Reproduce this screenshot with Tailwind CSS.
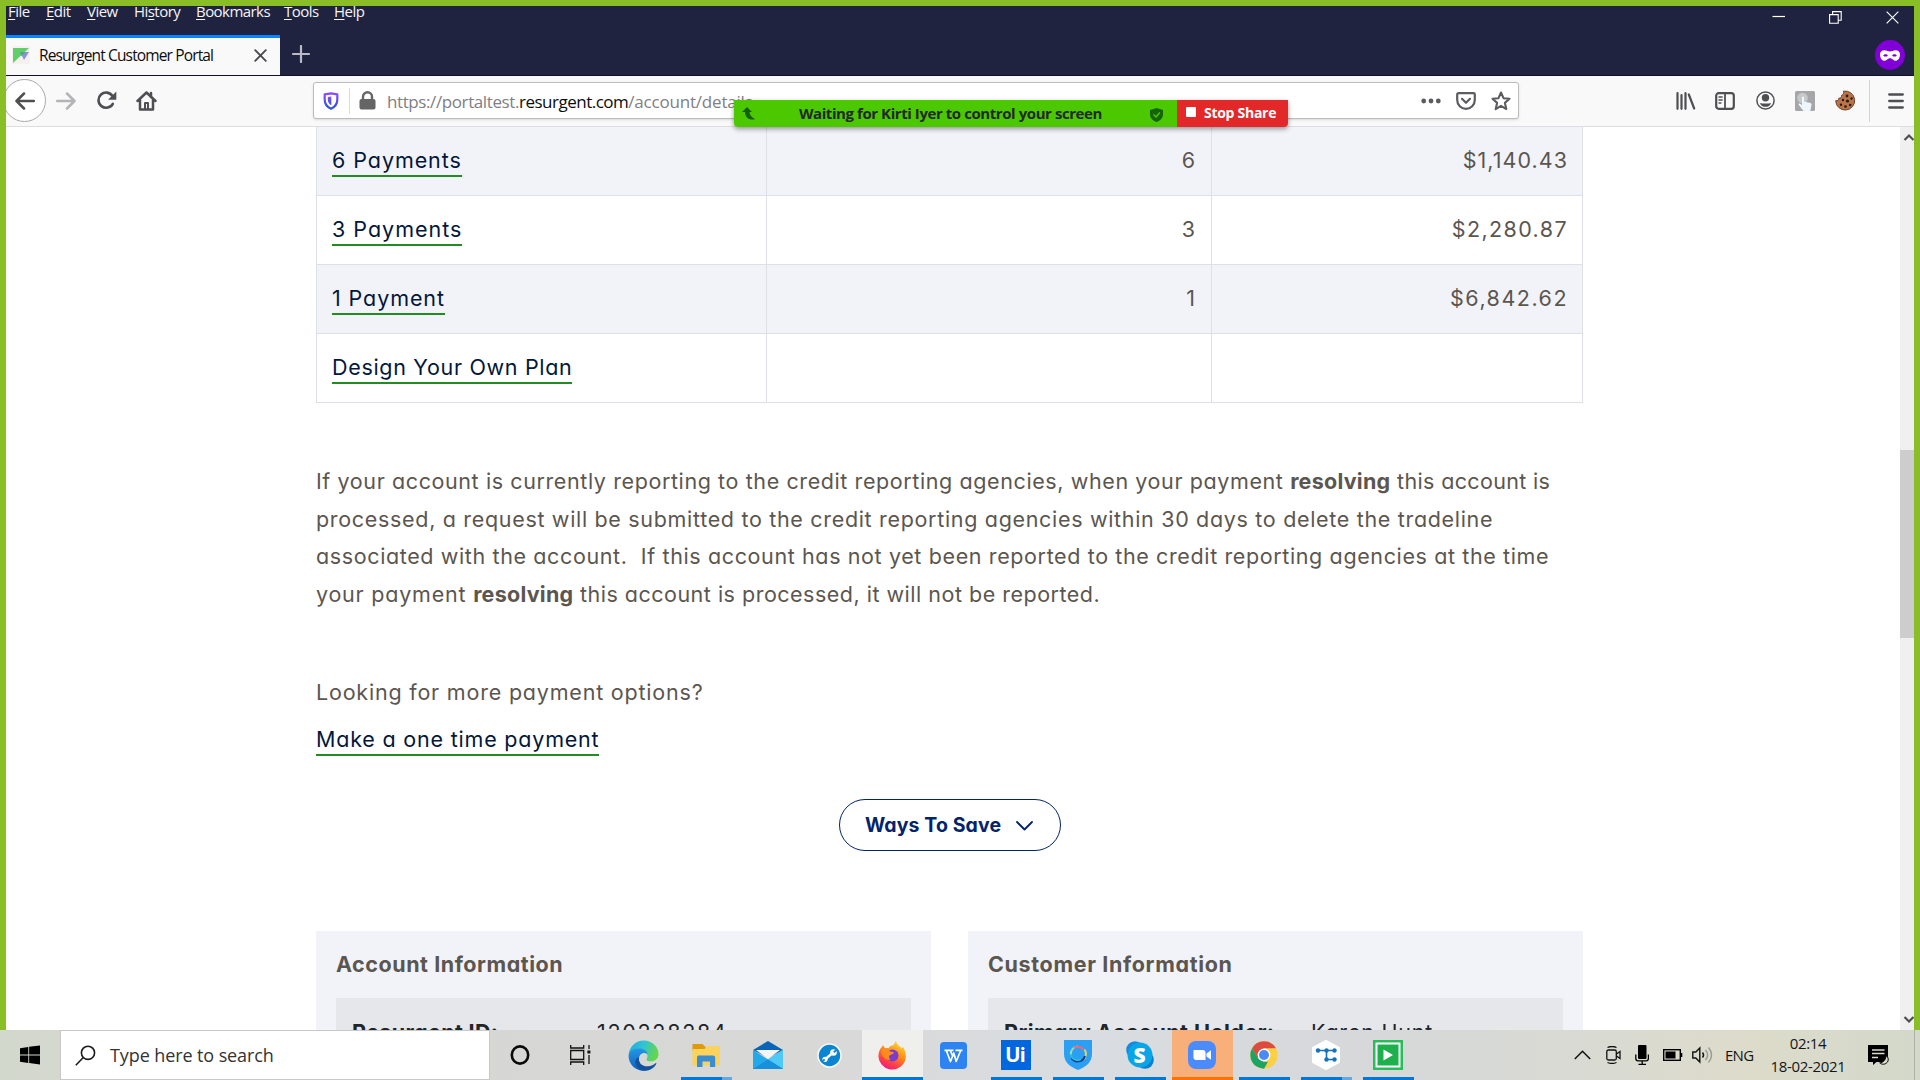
<!DOCTYPE html>
<html lang="en">
<head>
<meta charset="utf-8">
<title>Resurgent Customer Portal</title>
<script src="https://cdn.jsdelivr.net/npm/@tailwindcss/browser@4"></script>
</head>
<body class="w-[1920px] h-[1080px] overflow-hidden bg-white font-['Open_Sans',sans-serif]">
<div class="relative flex flex-col w-[1920px] h-[1080px]">

<!-- shared screen frame -->
<div class="flex flex-col h-[1030px] bg-[#8abe27] px-[6px] pt-[6px] overflow-hidden">

  <!-- title bar -->
  <header class="flex justify-between h-[70px] shrink-0 bg-[#20233f] border-b border-[#120f2b]">
    <div class="flex flex-col">
      <nav class="flex pl-[2px] h-[28px] text-[15px] leading-[11px] tracking-[-0.55px] text-[#f4f4f8]">
        <span class="w-[38px]"><u class="underline-offset-[2px]">F</u>ile</span>
        <span class="w-[41px]"><u class="underline-offset-[2px]">E</u>dit</span>
        <span class="w-[47px]"><u class="underline-offset-[2px]">V</u>iew</span>
        <span class="w-[62px]">Hi<u class="underline-offset-[2px]">s</u>tory</span>
        <span class="w-[88px]"><u class="underline-offset-[2px]">B</u>ookmarks</span>
        <span class="w-[50px]"><u class="underline-offset-[2px]">T</u>ools</span>
        <span><u class="underline-offset-[2px]">H</u>elp</span>
      </nav>
      <div class="flex h-[42px]">
        <div class="flex items-center w-[274px] bg-[#f9f9f9] border-t-[3px] border-[#0a84ff] pl-[6px] pb-[2px] mt-px">
          <svg class="w-[18px] h-[18px] shrink-0" viewBox="0 0 18 18"><rect width="18" height="18" fill="#f6f1ee"/><path d="M1 2h16L1 17z" fill="#5fd068"/><path d="M8 6h9l-5 8z" fill="#8a93d8"/><path d="M8 6h6l-5 4z" fill="#58a58f"/></svg>
          <span class="w-[224px] shrink-0 pl-[9px] text-[15.5px] tracking-[-0.86px] text-[#0c0c0d] whitespace-nowrap">Resurgent Customer Portal</span>
          <svg class="w-[13px] h-[13px] shrink-0" viewBox="0 0 13 13" stroke="#4a4a4f" stroke-width="1.9" stroke-linecap="round"><path d="M1.2 1.2l10.6 10.6M11.8 1.2L1.2 11.8"/></svg>
        </div>
        <svg class="w-[18px] h-[18px] ml-[12px] mt-[11px]" viewBox="0 0 18 18" stroke="#b9bac6" stroke-width="2.2" stroke-linecap="round"><path d="M9 1v16M1 9h16"/></svg>
      </div>
    </div>
    <div class="flex flex-col items-end pr-[9px]">
      <div class="flex items-center h-[22px] gap-[44px] pr-[6px]">
        <svg class="w-[13px] h-[13px]" viewBox="0 0 13 13" stroke="#fff" stroke-width="1.2"><path d="M.5 5.500h12.500"/></svg>
        <svg class="w-[13px] h-[13px]" viewBox="0 0 13 13" fill="none" stroke="#fff" stroke-width="1.1"><path d="M.6 3.6h8.6v8.6H.6zM3.6 3.5V.6h8.600v8.600H9.300"/></svg>
        <svg class="w-[13px] h-[13px]" viewBox="0 0 14 14" stroke="#fff" stroke-width="1.2"><path d="M.7.7l12.6 12.600M13.300.7L.7 13.300"/></svg>
      </div>
      <div class="flex items-center justify-center w-[30px] h-[30px] mt-[12px] rounded-full bg-[#8000d7]">
        <svg class="w-[20px] h-[11px]" viewBox="0 0 20 11"><path fill="#fff" fill-rule="evenodd" d="M4.5.2C7 .2 8.200 1.500 10 1.500S13 .2 15.500.2C18.500.2 20 2 20 4.500c0 3.500-2 6.300-4.300 6.300-2.700 0-3.200-2.500-5.700-2.500s-3 2.500-5.700 2.500C2 10.800 0 8 0 4.500 0 2 1.500.2 4.500.2zM3.200 5.400c1 1.600 3.600 1.600 4.700 0-1.100-1.700-3.700-1.700-4.700 0zm8.900 0c1.100 1.600 3.700 1.600 4.700 0-1-1.700-3.600-1.700-4.700 0z"/></svg>
      </div>
    </div>
  </header>

  <!-- navigation toolbar -->
  <div class="flex items-center h-[51px] shrink-0 bg-[#f9f9f9] border-b border-[#dedee0] pb-px text-[#4f4f53]">
    <div class="w-[307px] flex items-center overflow-hidden">
      <div class="flex items-center justify-center w-[43px] h-[43px] -ml-[3px] shrink-0 rounded-full bg-white border border-[#a9a9ac]">
        <svg class="w-[20px] h-[18px]" viewBox="0 0 20 18" fill="none" stroke="currentColor" stroke-width="2.5" stroke-linecap="round" stroke-linejoin="round"><path d="M9 1.500L1.500 9 9 16.500M2 9h16.800"/></svg>
      </div>
      <svg class="w-[20px] h-[18px] ml-[10px]" viewBox="0 0 20 18" fill="none" stroke="#b4b4b6" stroke-width="2.500" stroke-linecap="round" stroke-linejoin="round"><path d="M11 1.500L18.500 9 11 16.500M1.200 9H18"/></svg>
      <svg class="w-[20px] h-[19px] ml-[21px]" viewBox="0 0 20 19" fill="none" stroke="currentColor" stroke-width="2.600" stroke-linecap="round"><path d="M15.800 12.800A7.600 7.600 0 1 1 15.500 5"/><path d="M19.300.6v8.200h-8.200z" fill="currentColor" stroke="none"/></svg>
      <svg class="w-[21px] h-[20px] ml-[19px]" viewBox="0 0 21 20" fill="none" stroke="currentColor" stroke-width="2.500" stroke-linecap="round" stroke-linejoin="round"><path d="M1.500 10l9-8.500 9 8.500M4 9v9.500h13V9"/><path d="M9 18v-6h3v6" stroke-width="2"/><path d="M15 2v4" stroke-width="2.500"/></svg>
    </div>
    <div class="flex items-center w-[1206px] h-[37px] bg-white border border-[#bcbcbd] rounded-[3px] shadow-sm shrink-0">
      <svg class="w-[16px] h-[18px] ml-[9px] shrink-0" viewBox="0 0 16 18"><defs><linearGradient id="sh" x1="0" y1="0" x2="0" y2="1"><stop offset="0" stop-color="#8a4dff"/><stop offset="1" stop-color="#2a52d8"/></linearGradient></defs><path d="M8 1.300l6.300 1v5.200c0 4.500-2.300 7.500-6.300 9.200-4-1.700-6.300-4.700-6.300-9.200V2.300z" fill="none" stroke="url(#sh)" stroke-width="2.200" stroke-linejoin="round"/><path d="M8.300 4.500v8.800C6 12 4.800 10 4.800 7.500V5z" fill="url(#sh)"/></svg>
      <div class="w-px h-[26px] bg-[#dcdcdd] ml-[10px]"></div>
      <svg class="w-[17px] h-[19px] ml-[9px] shrink-0" viewBox="0 0 17 19"><path d="M4 9V5.800a4.500 4.500 0 0 1 9 0V9" fill="none" stroke="#656567" stroke-width="2.400"/><rect x=".5" y="8" width="16" height="10.500" rx="2" fill="#656567"/></svg>
      <div class="flex w-[1034px] shrink-0 ml-[11px] pt-[2px] text-[17px] text-[#808083] whitespace-nowrap"><span class="tracking-[-0.4px]">https://portaltest.</span><span class="text-[#0c0c0d] tracking-[-0.5px]">resurgent.com</span><span class="tracking-[-0.2px]">/account/details</span></div>
      <svg class="w-[20px] h-[6px] shrink-0" viewBox="0 0 20 6" fill="#5c5c60"><circle cx="2.700" cy="3" r="2.400"/><circle cx="10" cy="3" r="2.400"/><circle cx="17.300" cy="3" r="2.400"/></svg>
      <svg class="w-[20px] h-[18px] ml-[15px] shrink-0" viewBox="0 0 20 18" fill="none" stroke="#5c5c60" stroke-width="2.200" stroke-linecap="round" stroke-linejoin="round"><path d="M2.500 1.200h15c.8 0 1.300.5 1.300 1.300V8a8.800 8.800 0 0 1-17.600 0V2.500c0-.8.500-1.300 1.300-1.300z"/><path d="M6 6.800l4 4 4-4"/></svg>
      <svg class="w-[20px] h-[20px] ml-[15px] shrink-0" viewBox="0 0 20 20" fill="none" stroke="#5c5c60" stroke-width="2.100" stroke-linejoin="round"><path d="M10 1.500l2.500 5.700 6 .6-4.600 4.100 1.400 6.200L10 14.900l-5.300 3.200 1.400-6.200L1.500 7.800l6-.6z"/></svg>
    </div>
    <div class="flex items-center flex-1 pl-[157px]">
      <svg class="w-[20px] h-[18px] shrink-0" viewBox="0 0 20 18" stroke="currentColor" stroke-width="2.200" stroke-linecap="round"><path d="M1.500 1.200v15.600M5.500 3.200v13.600M9.500 1.200v15.600M12.800 2.500l5.400 14"/></svg>
      <svg class="w-[20px] h-[18px] ml-[19px] shrink-0" viewBox="0 0 20 18" fill="none" stroke="currentColor" stroke-width="2.200" stroke-linecap="round"><rect x="1.200" y="1.200" width="17.600" height="15.600" rx="2.500"/><path d="M10 1.500v15" stroke-width="1.800"/><path d="M4 5h3.200M4 8h3.200M4 11h2" stroke-width="1.300"/></svg>
      <svg class="w-[19px] h-[19px] ml-[21px] shrink-0" viewBox="0 0 19 19"><circle cx="9.500" cy="9.500" r="8.600" fill="none" stroke="#4f4f53" stroke-width="1.500"/><circle cx="9.500" cy="6.800" r="3.700" fill="#4f4f53"/><path d="M3.800 12.200c1.800 0 3 .3 5.700.3s3.900-.3 5.700-.3a6.300 6.300 0 0 1-11.400 0z" fill="#4f4f53"/></svg>
      <svg class="w-[20px] h-[20px] ml-[20px] shrink-0" viewBox="0 0 20 20"><rect width="20" height="20" rx="1.500" fill="#a6a6a8"/><circle cx="7.500" cy="7" r="5.300" fill="#c6c8c9"/><path d="M7 6.500c0-1.300 2-1.300 2 0v4l6.300 1.600c1 .3 1.400 1 1.200 2L15.300 20H8.500l-4.700-6c-.8-1.200.5-2 1.400-1.300L7 14.300z" fill="#eef6fd"/></svg>
      <svg class="w-[21px] h-[21px] ml-[20px] shrink-0" viewBox="0 0 21 21"><path d="M8.500 1.200a9.500 9.500 0 1 1-7.800 9.500c2 .3 3.300-.8 3.100-2.500 1.900.2 3.100-1 2.700-2.900C8.400 5 9 3 8.500 1.200z" fill="#b9744a" stroke="#5e3a24" stroke-width=".9"/><g fill="#2c1a10"><circle cx="12" cy="6" r="1.400"/><circle cx="16.500" cy="8.500" r="1.200"/><circle cx="8" cy="10" r="1.200"/><circle cx="12.500" cy="11" r="1.600"/><circle cx="6" cy="14.800" r="1.200"/><circle cx="10.500" cy="16.500" r="1.300"/><circle cx="15.200" cy="15" r="1.300"/></g></svg>
      <div class="w-px h-[42px] ml-[13px] bg-[#d5d5d7] shrink-0"></div>
      <svg class="w-[16px] h-[18px] ml-[18px] shrink-0" viewBox="0 0 16 18" stroke="currentColor" stroke-width="2.300" stroke-linecap="round"><path d="M1.200 2.500h13.600M1.200 9h13.600M1.200 15.500h13.600"/></svg>
    </div>
  </div>

  <!-- page -->
  <div class="flex flex-1 min-h-0 bg-white">
    <main class="flex flex-col flex-1 pl-[310px] overflow-hidden font-[Inter,sans-serif] text-[21.5px] leading-[30px] text-[#5b564f] [font-feature-settings:'cv11']">
      <section class="w-[1267px] shrink-0 border-x border-[#dee0e8]">
        <div class="grid grid-cols-[450px_445px_1fr] h-[69px] border-b border-[#dee0e8] bg-[#f2f3f9] divide-x divide-[#dee0e8]">
          <div class="pl-[15px] pt-[18px]"><a class="inline-block border-b-2 border-[#228b22] text-[#03173a] tracking-[0.93px]">6 Payments</a></div>
          <div class="pr-[16px] pt-[18px] text-right">6</div>
          <div class="pr-[14px] pt-[18px] text-right tracking-[1.05px]">$1,140.43</div>
        </div>
        <div class="grid grid-cols-[450px_445px_1fr] h-[69px] border-b border-[#dee0e8] divide-x divide-[#dee0e8]">
          <div class="pl-[15px] pt-[18px]"><a class="inline-block border-b-2 border-[#228b22] text-[#03173a] tracking-[1px]">3 Payments</a></div>
          <div class="pr-[16px] pt-[18px] text-right">3</div>
          <div class="pr-[14px] pt-[18px] text-right tracking-[1.4px]">$2,280.87</div>
        </div>
        <div class="grid grid-cols-[450px_445px_1fr] h-[69px] border-b border-[#dee0e8] bg-[#f2f3f9] divide-x divide-[#dee0e8]">
          <div class="pl-[15px] pt-[18px]"><a class="inline-block border-b-2 border-[#228b22] text-[#03173a] tracking-[0.9px]">1 Payment</a></div>
          <div class="pr-[16px] pt-[18px] text-right">1</div>
          <div class="pr-[14px] pt-[18px] text-right tracking-[1.5px]">$6,842.62</div>
        </div>
        <div class="grid grid-cols-[450px_445px_1fr] h-[69px] border-b border-[#dee0e8] divide-x divide-[#dee0e8]">
          <div class="pl-[15px] pt-[18px]"><a class="inline-block border-b-2 border-[#228b22] text-[#03173a] tracking-[0.68px]">Design Your Own Plan</a></div>
          <div></div>
          <div></div>
        </div>
      </section>

      <section class="mt-[60px] leading-[37.5px] whitespace-nowrap shrink-0">
        <p class="tracking-[0.6px]">If your account is currently reporting to the credit reporting agencies, when your payment <b class="tracking-[0.25px]">resolving</b> <span class="tracking-[0.35px]">this account is</span></p>
        <p class="tracking-[0.68px]">processed, a request will be submitted to the credit reporting agencies within 30 days to delete the tradeline</p>
        <p class="tracking-[0.62px]">associated with the account.&nbsp; If this account has not yet been reported to the credit reporting agencies at the time</p>
        <p class="tracking-[0.5px]"><span class="tracking-[0.78px]">your payment </span><b class="tracking-[0.25px]">resolving</b> this account is processed, it will not be reported.</p>
      </section>

      <p class="mt-[64px] tracking-[0.8px] shrink-0">Looking for more payment options?</p>
      <div class="mt-[17px] h-[32px] shrink-0"><a class="inline-block border-b-2 border-[#228b22] text-[#03173a] tracking-[0.8px]">Make a one time payment</a></div>

      <button class="flex items-center shrink-0 w-[222px] h-[52px] ml-[523px] mt-[43px] pl-[25px] border border-[#04236b] rounded-full text-[#04236b] text-[19.5px] font-bold whitespace-nowrap">
        <span class="w-[151px] text-left tracking-[0.1px]">Ways To Save</span>
        <svg class="w-[17px] h-[10px] mt-[2px]" viewBox="0 0 17 10" fill="none" stroke="#04236b" stroke-width="1.800" stroke-linecap="round" stroke-linejoin="round"><path d="M1 1l7.500 7.500L16 1"/></svg>
      </button>

      <div class="flex gap-[37px] mt-[80px] shrink-0">
        <section class="w-[615px] h-[160px] bg-[#f2f3f9] px-[20px] pt-[18px]">
          <h2 class="font-bold tracking-[0.55px]">Account Information</h2>
          <div class="flex h-[111px] mt-[19px] pl-[16px] pt-[19px] bg-[#e6e7eb] text-[#212529]">
            <b class="w-[245px] tracking-[0.35px]">Resurgent ID:</b><span class="tracking-[1.7px]">120228284</span>
          </div>
        </section>
        <section class="w-[615px] h-[160px] bg-[#f2f3f9] px-[20px] pt-[18px]">
          <h2 class="font-bold tracking-[0.65px]">Customer Information</h2>
          <div class="flex h-[111px] mt-[19px] pl-[16px] pt-[19px] bg-[#e6e7eb] text-[#212529]">
            <b class="w-[307px] tracking-[0.45px]">Primary Account Holder:</b><span class="tracking-[0.8px]">Karen Hunt</span>
          </div>
        </section>
      </div>
    </main>
    <!-- scrollbar -->
    <div class="flex flex-col w-[14px] bg-[#f0f0f0] shrink-0 overflow-hidden">
      <svg class="w-[14px] h-[20px] shrink-0" viewBox="0 0 14 20" fill="none" stroke="#505050" stroke-width="2.200"><path d="M4.500 13l4.500-4.500 4.500 4.500"/></svg>
      <div class="h-[188px] mt-[303px] bg-[#cdcdcd]"></div>
      <svg class="w-[14px] h-[20px] mt-auto shrink-0" viewBox="0 0 14 20" fill="none" stroke="#505050" stroke-width="2.200"><path d="M4.500 7l4.500 4.500L13.500 7"/></svg>
    </div>
  </div>
</div>

<!-- taskbar -->
<footer class="flex h-[50px] bg-[linear-gradient(90deg,#d3d8cd_0px,#d6d6d4_400px,#d8d8d6_800px,#d9dde1_1080px,#d6d8da_1350px,#d9dad2_1600px,#dddccb_1750px,#d3d8ca_1920px)]">
  <div class="flex items-center justify-center w-[60px]">
    <svg class="w-[20px] h-[20px]" viewBox="0 0 21 20"><path d="M0 2.800l8.700-1.200v7.900H0zM9.600 1.400L21 0v9.500H9.600zM0 10.400h8.700v8L0 17.200zM9.600 10.400H21V20L9.600 18.500z"/></svg>
  </div>
  <div class="flex items-center w-[430px] bg-white border border-[#c8c8c8] pl-[14px]">
    <svg class="w-[21px] h-[21px]" viewBox="0 0 21 21" fill="none" stroke="#1a1a1a" stroke-width="1.600"><circle cx="13" cy="7.800" r="6.600"/><path d="M8.300 12.500L.8 20.200"/></svg>
    <span class="ml-[14px] text-[18px] tracking-[-0.1px] text-[#333]">Type here to search</span>
  </div>
  <div class="grid grid-cols-[repeat(15,62px)] h-[50px]">
    <div class="flex items-center justify-center w-[61px] pr-[2px]"><svg class="w-[20px] h-[20px]" viewBox="0 0 20 20"><ellipse cx="10" cy="10" rx="8.200" ry="8.600" fill="none" stroke="#0a0a0a" stroke-width="2.600"/></svg></div>
    <div class="flex items-center justify-center w-[61px] pr-[4px]"><svg class="w-[21px] h-[20px]" viewBox="0 0 21 20" fill="none" stroke="#111" stroke-width="1.300"><path d="M.7 5.500h13v9H.7zM.7 0v3h13V0M.7 20v-3h13v3M19 0v4M19 10v9"/><path d="M17.400 5.500h3v3h-3z" fill="#111" stroke="none"/></svg></div>
    <div class="flex items-center justify-center w-[61px] pr-[2px]">
      <svg class="w-[31px] h-[31px]" viewBox="0 0 31 31"><defs><linearGradient id="e1" x1="0" y1="0" x2="1" y2=".3"><stop offset="0" stop-color="#1ea5e0"/><stop offset=".5" stop-color="#2fc3d6"/><stop offset="1" stop-color="#62d64f"/></linearGradient><linearGradient id="e2" x1="0" y1="0" x2="0" y2="1"><stop offset="0" stop-color="#2497e3"/><stop offset="1" stop-color="#0d5fc0"/></linearGradient></defs><path d="M.7 14.500C1.500 6.500 8 .5 15.800.5 24.500.5 30.500 7 30.500 14c0 4.500-3.300 7.300-7.500 7.300-3.500 0-5.200-1.200-4.200-2.600 2-3.500-.3-8-5.800-8C7 10.700 2 12 .7 14.500z" fill="url(#e1)"/><path d="M.6 15.500C1 11.500 5.500 8.500 10.800 8.500c5.200 0 8.500 2.500 8.700 6-2.500-3-8.500-1.500-8.500 4.500 0 5 3.500 9.500 9 11C10 33 .3 25.500.6 15.500z" fill="url(#e2)"/><path d="M11 17c-1.500 5 3 9.800 9 9.300 3.300-.2 6-1.500 7.800-3.300.6 0 .6.500.4 1-2 4-6.500 6.700-11.200 6.700-6 0-10-5-9.600-9.200.2-2 1.400-3.700 3.600-4.500z" fill="#12529b"/></svg>
    </div>
    <div class="relative flex items-center justify-center w-[61px] pr-[2px]">
      <svg class="w-[28px] h-[25px]" viewBox="0 0 28 25"><path d="M.5 1h10l3 3v4H.5z" fill="#dd9a0c"/><path d="M.5 6h12l3-3H28v19.500H.5z" fill="#fbd25c"/><path d="M5 24V14.500c0-1.500 1-2 2-2h14c1.300 0 2.200.8 2.200 2V24H18v-5.500h-7.500V24z" fill="#3a8dd0"/></svg>
      <span class="absolute bottom-0 left-[5px] w-[41px] h-[3px] bg-[#0078d7]"></span><span class="absolute bottom-0 left-[46px] w-[10px] h-[3px] bg-[#62a9e2]"></span>
    </div>
    <div class="flex items-center justify-center w-[61px] pr-[2px]">
      <svg class="w-[30px] h-[28px]" viewBox="0 0 30 28"><path d="M0 9L15 0l15 9-15 8z" fill="#0b63b5"/><path d="M3 9h24L15 18z" fill="#f5f5f5"/><path d="M0 9l15 9.500L30 9v19H0z" fill="#22a9ea"/><path d="M30 9v19L15 18.500z" fill="#4fc9f5"/><path d="M0 28l15-9.500L30 28z" fill="#1690da"/></svg>
    </div>
    <div class="flex items-center justify-center w-[61px] pr-[2px]">
      <svg class="w-[25px] h-[25px]" viewBox="0 0 25 25"><circle cx="12.500" cy="12.500" r="11.500" fill="#0a86d1" stroke="#f8f8f8" stroke-width="1.600"/><path d="M8.500 16l7-6" stroke="#fff" stroke-width="2.400"/><circle cx="8" cy="16.300" r="2.600" fill="#fff"/><circle cx="16.500" cy="9.500" r="3.300" fill="#fff"/><path d="M16.800 9.200l3-2.600M7.700 16.500l-2.500 1.800" stroke="#0a86d1" stroke-width="1.900"/></svg>
    </div>
    <div class="relative flex items-center justify-center w-[61px] pr-[2px] bg-[#efefee]">
      <svg class="w-[28px] h-[29px]" viewBox="0 0 28 29"><defs><linearGradient id="f1" x1=".8" y1="0" x2=".3" y2="1"><stop offset="0" stop-color="#ffe13a"/><stop offset=".45" stop-color="#ff8a16"/><stop offset=".8" stop-color="#ff3750"/><stop offset="1" stop-color="#e81a8a"/></linearGradient></defs><path d="M5 4l2 3.500c1-.4 2.500-.5 3.500-.3C12 5 13.500 4.500 15 4.500c1-1.500 2-3 3-4.500.5 3.500 4 5 5.500 7.500l1.500-1.500c3.500 5 3.700 11.500 1 16A13.800 13.800 0 0 1 .5 16C.2 11.500 2 7.500 3.800 6z" fill="url(#f1)"/><circle cx="14.500" cy="14.500" r="6" fill="#7a3bd0"/><path d="M3 9c3-2 7-1.500 9 1.500l4 .8c-.5 2-3 2.300-4.500 3.200-1 1.200-.5 3 1 4C6.500 20 3 14 3 9z" fill="#ff8a1e"/></svg>
      <span class="absolute bottom-0 left-0 w-[61px] h-[3px] bg-[#0078d7]"></span>
    </div>
    <div class="flex items-center justify-center w-[61px] pr-[2px]">
      <svg class="w-[27px] h-[27px]" viewBox="0 0 27 27"><rect width="27" height="27" rx="4" fill="#2d83f2"/><path d="M4.500 8.300h9M15.500 8.300h7M6.500 9l4 10.500 3.300-8.500 2.400 8.500L20.500 9M10.500 9l2.500 6" fill="none" stroke="#fff" stroke-width="1.700" stroke-linejoin="round"/></svg>
    </div>
    <div class="relative flex items-center justify-center w-[61px] pr-[2px]">
      <div class="flex items-center justify-center w-[30px] h-[30px] bg-[#0067df] text-white font-[Inter,sans-serif] font-bold text-[20px] leading-[20px]">Ui</div>
      <span class="absolute bottom-0 left-[5px] w-[51px] h-[3px] bg-[#0078d7]"></span>
    </div>
    <div class="relative flex items-center justify-center w-[61px] pr-[2px]">
      <svg class="w-[28px] h-[30px]" viewBox="0 0 28 30"><path d="M0 0h28v14c0 8-6 13-14 16C6 27 0 22 0 14z" fill="#2b9ff3"/><g fill="none" stroke-width="2"><path d="M7 15a7 7 0 0 1 7-8.500" stroke="#8be0b0"/><path d="M10 7.800a7.500 7.500 0 0 1 10 2.200" stroke="#e8687d"/><path d="M20.500 9.500a7.500 7.500 0 0 1-1 10" stroke="#e8d25f"/><path d="M21 16a7.500 7.500 0 0 1-13.500 2" stroke="#123f8f"/><path d="M7 14c0 5 5 7.500 10 5.500" stroke="#2ec0d8" stroke-width="1.500"/></g></svg>
      <span class="absolute bottom-0 left-[5px] w-[51px] h-[3px] bg-[#0078d7]"></span>
    </div>
    <div class="relative flex items-center justify-center w-[61px] pr-[2px]">
      <div class="relative flex items-center justify-center w-[28px] h-[28px]">
        <svg class="absolute inset-0 w-[28px] h-[28px]" viewBox="0 0 28 28"><circle cx="9" cy="9" r="8.800" fill="#1789dc"/><circle cx="19" cy="19" r="8.800" fill="#0a7fd2"/><circle cx="14" cy="14" r="12.500" fill="#0aa5e6"/></svg>
        <span class="relative text-white font-extrabold text-[21px] leading-[22px]">S</span>
      </div>
      <span class="absolute bottom-0 left-[5px] w-[51px] h-[3px] bg-[#0078d7]"></span>
    </div>
    <div class="relative flex items-center justify-center w-[61px] pr-[2px] bg-[#f8af7a]">
      <svg class="w-[28px] h-[28px]" viewBox="0 0 28 28"><rect width="28" height="28" rx="8" fill="#4a8cff"/><path d="M5.500 9h9.500c1.500 0 2.500 1 2.500 2.500V19H8c-1.500 0-2.500-1-2.500-2.500zM18.500 12.500l4.500-3.300v9.600l-4.500-3.300z" fill="#fff"/></svg>
      <span class="absolute bottom-0 left-0 w-[61px] h-[3px] bg-[#ff7200]"></span>
    </div>
    <div class="relative flex items-center justify-center w-[61px] pr-[2px]">
      <svg class="w-[28px] h-[28px]" viewBox="0 0 28 28"><circle cx="14" cy="14" r="13.700" fill="#fcd045"/><path d="M2.100 7.200A13.700 13.700 0 0 1 25.900 7.200H14L8 17.500z" fill="#dd4b3e"/><path d="M2.100 7.200L8.100 17.500 14 20.800h4L14 27.700A13.700 13.700 0 0 1 2.100 7.200z" fill="#1da462"/><circle cx="14" cy="14" r="6.400" fill="#fff"/><circle cx="14" cy="14" r="5" fill="#4c8bf5"/></svg>
      <span class="absolute bottom-0 left-[5px] w-[51px] h-[3px] bg-[#0078d7]"></span>
    </div>
    <div class="relative flex items-center justify-center w-[61px] pr-[2px]">
      <svg class="w-[28px] h-[30px]" viewBox="0 0 28 30"><path d="M14 1l13 7v14l-13 7-13-7V8z" fill="#fff" stroke="#fff" stroke-width="2" stroke-linejoin="round"/><path d="M6 10.500h17M14.500 10.500v9h8" fill="none" stroke="#1274bd" stroke-width="1.600"/><g fill="#1274bd"><circle cx="6" cy="10.500" r="2.200"/><circle cx="14.500" cy="10.500" r="2.200"/><circle cx="22.500" cy="10.500" r="2.200"/><circle cx="14.500" cy="19.500" r="2.200"/><circle cx="22.500" cy="19.500" r="2.200"/></g></svg>
      <span class="absolute bottom-0 left-[5px] w-[41px] h-[3px] bg-[#0078d7]"></span><span class="absolute bottom-0 left-[46px] w-[10px] h-[3px] bg-[#62a9e2]"></span>
    </div>
    <div class="relative flex items-center justify-center w-[61px] pr-[2px]">
      <svg class="w-[30px] h-[30px]" viewBox="0 0 30 30"><rect width="30" height="30" fill="#27bd58"/><rect x="3.500" y="3.500" width="23" height="23" fill="#1fb04e" stroke="#fff" stroke-width="2"/><path d="M10.500 9.500l9.500 5.500-9.500 5.500z" fill="#fff"/></svg>
      <span class="absolute bottom-0 left-[5px] w-[51px] h-[3px] bg-[#0078d7]"></span>
    </div>
  </div>
  <!-- tray -->
  <div class="flex items-center flex-1 pl-[154px] text-[15px] text-[#151515]">
    <svg class="w-[17px] h-[10px] shrink-0" viewBox="0 0 17 10" fill="none" stroke="#111" stroke-width="1.500"><path d="M.8 9l7.700-7.700L16.200 9"/></svg>
    <svg class="w-[15px] h-[18px] ml-[15px] shrink-0" viewBox="0 0 15 18" fill="none" stroke="#111" stroke-width="1.300"><rect x=".8" y="4" width="9.500" height="10" rx="1.500"/><path d="M10.500 8l3.500-2.500v7L10.500 10M1.500 1.500c3-1.300 6-1.300 9 0M1.500 16.500c3 1.300 6 1.300 9 0"/></svg>
    <svg class="w-[14px] h-[20px] ml-[14px] shrink-0" viewBox="0 0 14 20"><rect x="3" width="8.500" height="14" rx="1" fill="#000"/><path d="M.8 9.500v4c0 1.500 1 2.300 2.300 2.300h8c1.300 0 2.300-.8 2.300-2.300v-4M7.200 16v3.300M3.500 19.300h7.500" fill="none" stroke="#000" stroke-width="1.300"/></svg>
    <svg class="w-[20px] h-[12px] ml-[14px] shrink-0" viewBox="0 0 20 12"><rect x=".7" y=".7" width="16.600" height="10.600" fill="none" stroke="#000" stroke-width="1.400"/><rect x="2.500" y="2.500" width="10" height="7" fill="#000"/><path d="M18.500 4v4" stroke="#000" stroke-width="1.600"/></svg>
    <svg class="w-[21px] h-[18px] ml-[9px] shrink-0" viewBox="0 0 21 18" fill="none" stroke="#111" stroke-width="1.400"><path d="M.8 6h3l4-4v14l-4-4h-3z"/><path d="M10.500 6.500c1.300 1.500 1.300 3.500 0 5"/><path d="M13.500 4c2.600 3 2.600 7 0 10M16.500 1.500c4 4.500 4 10.500 0 15" stroke="#9a9a94"/></svg>
    <span class="ml-[12px] w-[37px] tracking-[-0.75px]">ENG</span>
    <div class="flex flex-col items-center w-[92px] leading-[23px] tracking-[-0.35px] pb-px"><span>02:14</span><span>18-02-2021</span></div>
    <svg class="w-[21px] h-[21px] ml-[14px] shrink-0" viewBox="0 0 21 21"><path d="M0 0h20v17H8.500L5 20v-3H0z" fill="#000"/><path d="M4 5h12.500M4 8.500h12.500M4 12.500h6" stroke="#dcdccb" stroke-width="1.300"/><path d="M18 10.500c2.500 1.500 3 5 1 7-2 2.300-5.500 2.200-7.300.3 3.300 0 6.300-3 6.300-7.300z" fill="#dcdccb" stroke="#000" stroke-width="1"/></svg>
    <div class="w-px h-[50px] ml-auto mr-[5px] bg-[#aeb1a5]"></div>
  </div>
</footer>

<!-- screen-share control strip -->
<div class="absolute left-[734px] top-[100px] flex h-[27px] w-[554px] shadow-[0_2px_5px_rgba(0,0,0,0.4)] rounded-b-[4px] overflow-hidden text-[#23282b]">
  <div class="flex items-center w-[443px] bg-[#4cc800]">
    <svg class="w-[13px] h-[13px] ml-[8px] shrink-0" viewBox="0 0 13 13"><path d="M5 0l5 5H7.500c0 3 2 5 5.500 7.300C7 13.500 3 10.500 3 5H0z" fill="#14600a"/></svg>
    <span class="w-[351px] ml-[44px] text-[15px] font-bold tracking-[-0.43px] whitespace-nowrap">Waiting for Kirti Iyer to control your screen</span>
    <svg class="w-[13px] h-[14px] shrink-0 mt-[3px]" viewBox="0 0 13 14"><path d="M6.500 0L13 2v4.500c0 3.500-2.700 6-6.500 7.500C2.700 12.500 0 10 0 6.500V2z" fill="#17630c"/><path d="M3.500 6.500L6 9l3.800-4.500" fill="none" stroke="#4cc800" stroke-width="1.400"/></svg>
  </div>
  <div class="flex items-center flex-1 bg-[#e22828] text-white pl-[9px] pb-[3px]">
    <span class="w-[10px] h-[10px] rounded-[1px] bg-white"></span>
    <span class="ml-[8px] text-[14px] font-bold tracking-[-0.28px] whitespace-nowrap">Stop Share</span>
  </div>
</div>
</div>
</body>
</html>
